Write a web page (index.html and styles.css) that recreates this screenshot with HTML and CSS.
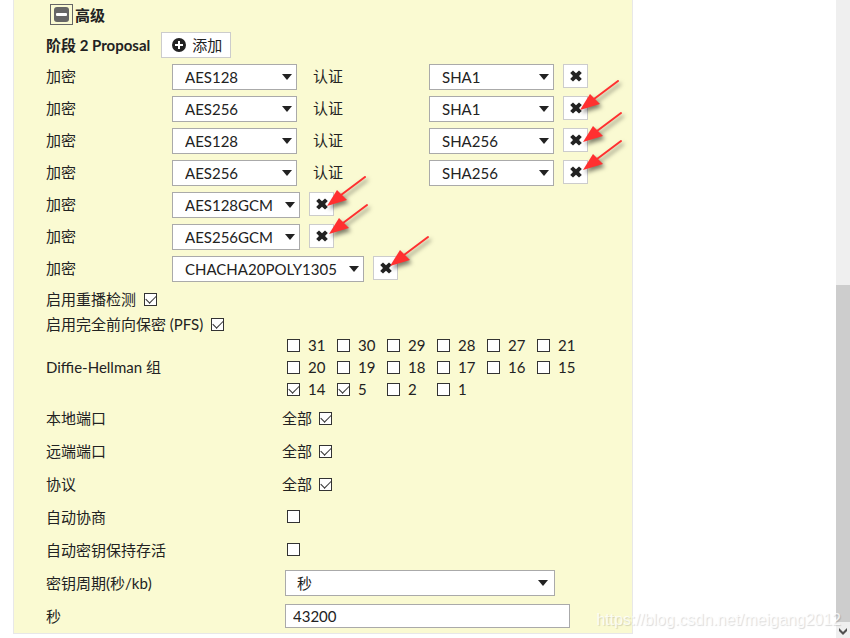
FILE: index.html
```html
<!DOCTYPE html>
<html lang="zh-CN">
<head>
<meta charset="utf-8">
<title>阶段 2 Proposal</title>
<link rel="stylesheet" href="styles.css">
</head>
<body>
<svg class="defs" aria-hidden="true">
  <symbol id="cross" viewBox="0 0 12 12"><path d="M3 .4 6 3.2 9 .4 11.8 3 9 6l2.8 3L9 11.6 6 8.8 3 11.6.2 9 3 6 .2 3z"/></symbol>
</svg>
<div class="page">
<main>
<form class="panel">
  <h2 class="section"><button type="button" class="collapse" aria-label="折叠"><svg viewBox="0 0 15 15"><rect width="15" height="15" rx="3" fill="#666"/><rect x="2" y="6" width="11" height="3" rx="1" fill="#fff"/></svg></button>高级</h2>
  <div class="proposal-head"><h3>阶段 2 Proposal</h3><button type="button" class="add"><svg viewBox="0 0 14 14"><circle cx="7" cy="7" r="7"/><path d="M7 3v8M3 7h8" stroke="#fff" stroke-width="2"/></svg>添加</button></div>

  <div class="proposals">
    <div class="proposal"><label for="e1">加密</label><span class="pick"><select id="e1"><option>AES128</option></select></span><label class="auth" for="a1">认证</label><span class="pick"><select id="a1"><option>SHA1</option></select></span><button type="button" class="remove" aria-label="删除"><svg><use href="#cross"/></svg></button></div>
    <div class="proposal"><label for="e2">加密</label><span class="pick"><select id="e2"><option>AES256</option></select></span><label class="auth" for="a2">认证</label><span class="pick"><select id="a2"><option>SHA1</option></select></span><button type="button" class="remove" aria-label="删除"><svg><use href="#cross"/></svg></button></div>
    <div class="proposal"><label for="e3">加密</label><span class="pick"><select id="e3"><option>AES128</option></select></span><label class="auth" for="a3">认证</label><span class="pick"><select id="a3"><option>SHA256</option></select></span><button type="button" class="remove" aria-label="删除"><svg><use href="#cross"/></svg></button></div>
    <div class="proposal"><label for="e4">加密</label><span class="pick"><select id="e4"><option>AES256</option></select></span><label class="auth" for="a4">认证</label><span class="pick"><select id="a4"><option>SHA256</option></select></span><button type="button" class="remove" aria-label="删除"><svg><use href="#cross"/></svg></button></div>
    <div class="proposal"><label for="e5">加密</label><span class="pick"><select id="e5"><option>AES128GCM</option></select></span><button type="button" class="remove" aria-label="删除"><svg><use href="#cross"/></svg></button></div>
    <div class="proposal"><label for="e6">加密</label><span class="pick"><select id="e6"><option>AES256GCM</option></select></span><button type="button" class="remove" aria-label="删除"><svg><use href="#cross"/></svg></button></div>
    <div class="proposal"><label for="e7">加密</label><span class="pick"><select id="e7"><option>CHACHA20POLY1305</option></select></span><button type="button" class="remove" aria-label="删除"><svg><use href="#cross"/></svg></button></div>
  </div>

  <div class="toggles">
    <label class="toggle">启用重播检测<input type="checkbox" checked></label>
    <label class="toggle">启用完全前向保密 (PFS)<input type="checkbox" checked></label>
  </div>

  <fieldset class="field groups">
    <legend>Diffie-Hellman 组</legend>
    <div class="group-grid">
      <label><input type="checkbox">31</label><label><input type="checkbox">30</label><label><input type="checkbox">29</label><label><input type="checkbox">28</label><label><input type="checkbox">27</label><label><input type="checkbox">21</label>
      <label><input type="checkbox">20</label><label><input type="checkbox">19</label><label><input type="checkbox">18</label><label><input type="checkbox">17</label><label><input type="checkbox">16</label><label><input type="checkbox">15</label>
      <label><input type="checkbox" checked>14</label><label><input type="checkbox" checked>5</label><label><input type="checkbox">2</label><label><input type="checkbox">1</label>
    </div>
  </fieldset>

  <div class="field"><span>本地端口</span><label class="all">全部<input type="checkbox" checked></label></div>
  <div class="field"><span>远端端口</span><label class="all">全部<input type="checkbox" checked></label></div>
  <div class="field"><span>协议</span><label class="all">全部<input type="checkbox" checked></label></div>
  <div class="field"><label for="nego">自动协商</label><span class="single"><input id="nego" type="checkbox"></span></div>
  <div class="field"><label for="keep">自动密钥保持存活</label><span class="single"><input id="keep" type="checkbox"></span></div>
  <div class="field"><label for="life">密钥周期(秒/kb)</label><span class="pick wide"><select id="life"><option>秒</option></select></span></div>
  <div class="field"><label for="secs">秒</label><input id="secs" class="text" type="text" value="43200"></div>

  <svg class="arrows" viewBox="0 0 620 634" aria-hidden="true">
    <defs><g id="arrow"><path d="M14-11 38-29" stroke="#ff3030" stroke-width="2" stroke-linecap="round"/><path d="M0 0 10-16 20-6z" fill="#ff3030"/></g></defs>
    <g class="marks">
      <use href="#arrow" x="566" y="110"/><use href="#arrow" x="569" y="142"/><use href="#arrow" x="569" y="170"/>
      <use href="#arrow" x="313" y="206"/><use href="#arrow" x="315" y="234"/><use href="#arrow" x="376" y="266"/>
    </g>
  </svg>
</form>
</main>
<div class="scroll" aria-hidden="true"><div class="thumb"></div><svg viewBox="0 0 14 16"><path d="M3 6v3l4 4 4-4V6L7 10z" fill="#505050"/></svg></div>
<div class="watermark">https://blog.csdn.net/meigang2012</div>
</div>
</body>
</html>
```
FILE: styles.css
```css
* { box-sizing: border-box; }

body {
  margin: 0;
  background: #fff;
  color: #222;
  font: 15px/20px Lato, "Noto Sans CJK SC", sans-serif;
}

button, input, select { font: inherit; color: inherit; margin: 0; }
.defs { position: absolute; width: 0; height: 0; }

.page {
  position: relative;
  display: flex;
  justify-content: space-between;
  min-height: 100vh;
}

main { flex: 1; padding-left: 13px; }

.panel {
  position: relative;
  max-width: 620px;
  padding: 2px 0 1px 32px;
  background: #fafad2;
  border: solid #e8e8e8;
  border-width: 0 1px 1px;
}

.section, h3 { margin: 0; font-size: 15px; font-weight: 700; }

.section {
  display: flex;
  align-items: center;
  gap: 2px;
  height: 25px;
  padding-left: 4px;
}

.collapse {
  display: grid;
  place-items: center;
  width: 23px;
  height: 21px;
  padding: 0;
  background: none;
  border: 1px solid #666;
}
.collapse svg { width: 15px; height: 15px; }

.proposal-head {
  display: flex;
  align-items: center;
  gap: 11px;
  height: 37px;
  padding-bottom: 1px;
}

.add {
  display: flex;
  align-items: center;
  gap: 6px;
  height: 26px;
  padding: 0 8px 0 10px;
  background: #fff;
  border: 1px solid #ccc;
}
.add svg { width: 14px; height: 14px; fill: #222; }

.proposals {
  display: flex;
  flex-direction: column;
  gap: 6px;
}
.proposal {
  display: flex;
  align-items: flex-start;
}
.proposal > label { width: 126px; line-height: 24px; }
.proposal > .auth { width: 116px; margin-left: 16px; }

.pick { position: relative; display: block; }
.pick::after {
  content: "";
  position: absolute;
  top: 10px;
  right: 5px;
  border: solid transparent;
  border-width: 6px 5px 0;
  border-top-color: #222;
  pointer-events: none;
}

select {
  appearance: none;
  display: block;
  min-width: 125px;
  height: 26px;
  padding: 0 26px 0 12px;
  background: #fff;
  border: 1px solid #aaa;
  border-radius: 0;
}
.wide { width: 270px; margin-left: 3px; }
.wide::after { right: 7px; }
.wide select { width: 100%; padding-left: 11px; }

.remove {
  display: grid;
  place-items: center;
  width: 25px;
  height: 24px;
  margin-left: 9px;
  padding: 0;
  background: #fff;
  border: 1px solid #ccc;
}
.remove svg { width: 12px; height: 12px; fill: #222; }

input[type="checkbox"] {
  appearance: none;
  flex: none;
  display: grid;
  place-items: center;
  width: 13px;
  height: 13px;
  background: #fff;
  border: 1px solid #333;
}
input[type="checkbox"]:checked::before {
  content: "";
  width: 9px;
  height: 5px;
  margin-bottom: 3px;
  border: solid #333;
  border-width: 0 0 1px 1px;
  transform: rotate(-45deg);
}

.toggles {
  display: flex;
  flex-direction: column;
  gap: 5px;
  margin-top: 7px;
}
.toggle {
  display: flex;
  align-items: center;
  gap: 8px;
  width: fit-content;
}

.groups, .field {
  align-items: center;
  min-height: 33px;
  margin: 0;
  padding: 0;
  border: 0;
}
.field {
  display: grid;
  grid-template-columns: 236px 1fr;
}

.groups { display: flex; padding-bottom: 1px; }
.groups legend { float: left; width: 241px; padding: 0; }
.group-grid {
  display: grid;
  grid-template-columns: repeat(6, 50px);
}
.group-grid label {
  display: flex;
  align-items: center;
  gap: 8px;
  height: 22px;
}

.all { display: flex; align-items: center; gap: 7px; }
.all input { margin-top: 2px; }
.single { padding-left: 5px; }

.text {
  width: 285px;
  height: 24px;
  margin-left: 3px;
  padding: 0 7px;
  background: #fff;
  border: 1px solid #aaa;
}

.arrows {
  position: absolute;
  top: 0;
  left: 0;
  width: 620px;
  height: 634px;
  pointer-events: none;
}
.marks { filter: drop-shadow(2px 3px 2px rgba(0, 0, 0, .5)); }

.scroll {
  display: flex;
  flex-direction: column;
  width: 14px;
  padding-top: 285px;
  background: #efefef;
}
.thumb { flex: 1; background: #cdcdcd; }
.scroll svg { width: 14px; height: 16px; }

.watermark {
  position: absolute;
  right: 9px;
  bottom: 8px;
  color: rgba(255, 255, 255, .8);
  font: 16px/20px "Liberation Sans", sans-serif;
  text-shadow: 1px 1px 1px rgba(0, 0, 0, .15);
}
```
